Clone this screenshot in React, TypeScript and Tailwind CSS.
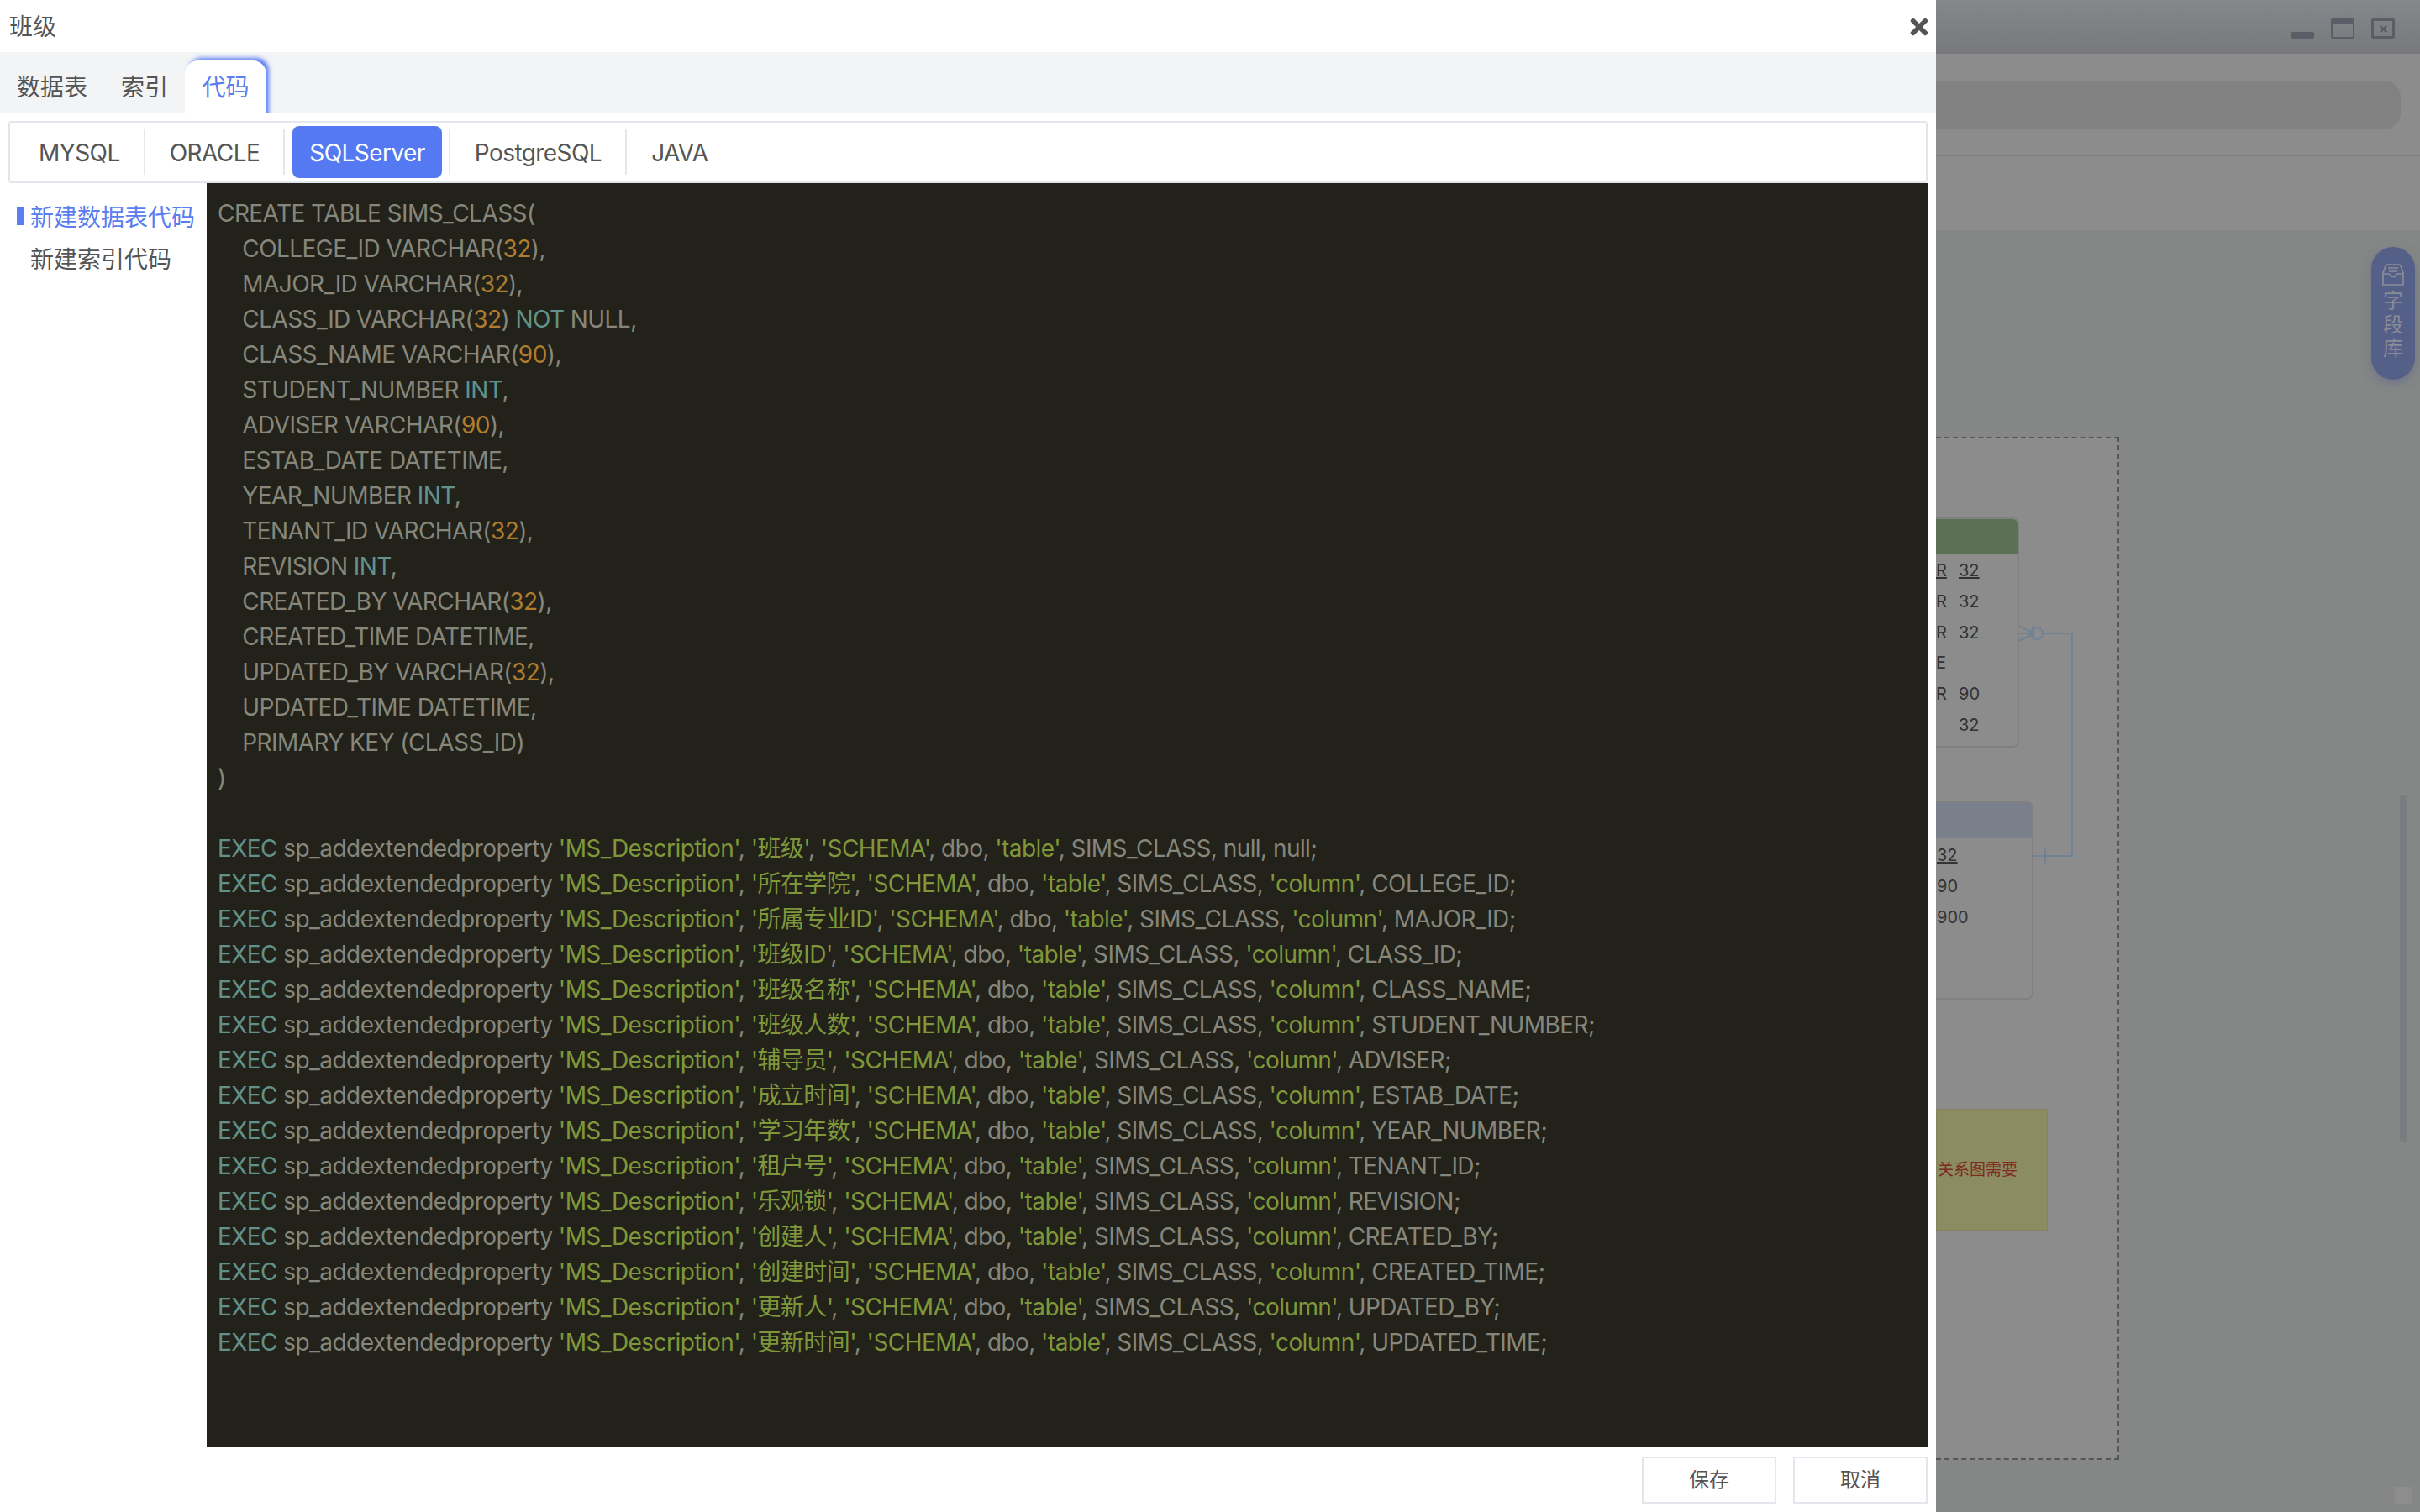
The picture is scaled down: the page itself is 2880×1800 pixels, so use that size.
import { FaTimes } from 'react-icons/fa'

const FONT = "font-['Inter','Noto_Sans_CJK_SC',sans-serif]"

const createLines = [
  'CREATE TABLE SIMS_CLASS(',
  '    COLLEGE_ID VARCHAR(32),',
  '    MAJOR_ID VARCHAR(32),',
  '    CLASS_ID VARCHAR(32) NOT NULL,',
  '    CLASS_NAME VARCHAR(90),',
  '    STUDENT_NUMBER INT,',
  '    ADVISER VARCHAR(90),',
  '    ESTAB_DATE DATETIME,',
  '    YEAR_NUMBER INT,',
  '    TENANT_ID VARCHAR(32),',
  '    REVISION INT,',
  '    CREATED_BY VARCHAR(32),',
  '    CREATED_TIME DATETIME,',
  '    UPDATED_BY VARCHAR(32),',
  '    UPDATED_TIME DATETIME,',
  '    PRIMARY KEY (CLASS_ID)',
  ')',
  '',
]

const columns = [
  ['所在学院', 'COLLEGE_ID'],
  ['所属专业ID', 'MAJOR_ID'],
  ['班级ID', 'CLASS_ID'],
  ['班级名称', 'CLASS_NAME'],
  ['班级人数', 'STUDENT_NUMBER'],
  ['辅导员', 'ADVISER'],
  ['成立时间', 'ESTAB_DATE'],
  ['学习年数', 'YEAR_NUMBER'],
  ['租户号', 'TENANT_ID'],
  ['乐观锁', 'REVISION'],
  ['创建人', 'CREATED_BY'],
  ['创建时间', 'CREATED_TIME'],
  ['更新人', 'UPDATED_BY'],
  ['更新时间', 'UPDATED_TIME'],
]

const codeLines = [
  ...createLines,
  "EXEC sp_addextendedproperty 'MS_Description', '班级', 'SCHEMA', dbo, 'table', SIMS_CLASS, null, null;",
  ...columns.map(
    ([label, name]) =>
      `EXEC sp_addextendedproperty 'MS_Description', '${label}', 'SCHEMA', dbo, 'table', SIMS_CLASS, 'column', ${name};`,
  ),
]

const CodeLine = ({ text }: { text: string }) => {
  const parts = text.split(/('[^']*'|\bEXEC\b|\bNOT\b|\bINT\b|\b\d+\b)/)
  return (
    <div className="h-[42px] whitespace-pre leading-[42px]">
      {parts.map((part, i) => {
        if (part.startsWith("'")) {
          return (
            <span key={i} className="text-[#7f973a]">
              {part}
            </span>
          )
        }
        if (/^\d+$/.test(part)) {
          return (
            <span key={i} className="text-[#b07c2e]">
              {part}
            </span>
          )
        }
        if (part === 'EXEC' || part === 'NOT' || part === 'INT') {
          return (
            <span key={i} className="text-[#62918a]">
              {part}
            </span>
          )
        }
        return <span key={i}>{part}</span>
      })}
    </div>
  )
}

const Separator = () => <div className="-mx-px h-[54px] w-[2px] bg-[#e3e6ec]" />

const DbTab = ({ label, active }: { label: string; active?: boolean }) => (
  <div
    className={
      active
        ? 'ml-[10px] mr-[9px] flex h-[62px] items-center rounded-[8px] bg-[#5579f2] px-[20px] pt-[2px] text-white'
        : 'ml-[10px] mr-[9px] flex h-[62px] items-center px-[20px] pt-[2px]'
    }
  >
    {label}
  </div>
)

const Modal = () => (
  <div className="absolute left-0 top-0 flex h-[1800px] w-[2304px] flex-col bg-white text-[28px] text-[#555]">
    <div className="flex h-[62px] items-center justify-between pl-[11px] pr-[7px] pt-[2px]">
      <span>班级</span>
      <FaTimes className="h-[30px] w-[26px] text-[#555]" />
    </div>
    <div className="flex h-[72px] items-start overflow-hidden bg-[#f3f4f6] pt-[10px]">
      <div className="flex h-[62px] items-center px-[20px] pt-[2px]">数据表</div>
      <div className="flex h-[62px] items-center px-[20px] pt-[2px]">索引</div>
      <div className="flex h-[80px] w-[97px] items-start justify-center rounded-t-[16px] bg-white pt-[11px] text-[#5a7df0] shadow-[4px_-4px_5px_-1px_#5b7ff5]">
        代码
      </div>
    </div>
    <div className="mx-[10px] mt-[10px] flex h-[74px] items-center rounded-[4px] border-2 border-[#e3e6ec] pl-[4px] tracking-[-0.56px]">
      <DbTab label="MYSQL" />
      <Separator />
      <DbTab label="ORACLE" />
      <Separator />
      <DbTab label="SQLServer" active />
      <Separator />
      <DbTab label="PostgreSQL" />
      <Separator />
      <DbTab label="JAVA" />
    </div>
    <div className="flex h-[1505px] pr-[10px]">
      <div className="w-[246px] shrink-0 pt-[16px]">
        <div className="relative flex h-[50px] items-center pl-[36px] text-[#5a7df0]">
          <span className="absolute left-[20px] top-[12px] h-[22px] w-[8px] bg-[#5a7df0]" />
          新建数据表代码
        </div>
        <div className="flex h-[50px] items-center pl-[36px]">新建索引代码</div>
      </div>
      <div className="flex-1 bg-[#22221b] pl-[13px] pt-[15px] tracking-[-0.56px] text-[#86867a]">
        {codeLines.map((line, i) => (
          <CodeLine key={i} text={line} />
        ))}
      </div>
    </div>
    <div className="flex justify-end gap-[20px] pr-[10px] pt-[11px]">
      <div className="flex h-[56px] w-[160px] items-center justify-center border-2 border-[#e3e6ec] text-[24px]">
        保存
      </div>
      <div className="flex h-[56px] w-[160px] items-center justify-center border-2 border-[#e3e6ec] text-[24px]">
        取消
      </div>
    </div>
  </div>
)

const WindowButtons = () => (
  <div className="flex items-end gap-[20px] pb-[18px] pr-[30px]">
    <div className="h-[8px] w-[28px] rounded-[2px] bg-[#5d5d68]" />
    <div className="h-[24px] w-[28px] rounded-[2px] border-2 border-t-[6px] border-[#5d5d68]" />
    <div className="flex h-[24px] w-[28px] items-center justify-center rounded-[2px] border-[3px] border-[#5d5d68]">
      <FaTimes className="h-[13px] w-[11px] text-[#5d5d68]" />
    </div>
  </div>
)

const FieldLibrary = () => (
  <div className="absolute left-[2822px] top-[294px] flex h-[158px] w-[52px] flex-col items-center rounded-full bg-[#556089] pt-[20px] text-[24px] leading-[28.5px] text-[#8a8c96] shadow-[0_4px_12px_rgba(85,96,137,0.5)]">
    <svg viewBox="0 0 26 26" className="mb-[4px] h-[26px] w-[26px]" fill="none" stroke="#8a8c96" strokeWidth="1.7">
      <path d="M1 11 L4 2.5 Q4.5 1 6 1 H20 Q21.5 1 22 2.5 L25 11 V25 H1 Z" />
      <path d="M1 12 H8 Q9 12 10 14 L11 15.5 H15 L16 14 Q17 12 18 12 H25" />
      <path d="M7 5 H19 M8 9 H18" />
    </svg>
    <span>字</span>
    <span>段</span>
    <span>库</span>
  </div>
)

const Diagram = () => (
  <div className="absolute left-[2304px] top-[520px] h-[1218px] w-[218px] border-r-2 border-t-2 border-b-2 border-dashed border-[#55565a] bg-[#8c8c8c] text-[20px] text-[#333]">
    <div className="absolute left-0 top-[94px] h-[274px] w-[99px] rounded-r-[8px] border-2 border-l-0 border-[#808080]">
      <div className="h-[42px] rounded-tr-[6px] bg-[#5b6f54]" />
      {['R', 'R', 'R', 'E', 'R', ''].map((t, i) => (
        <div key={i} className="flex h-[36.7px] items-center pt-[2px]">
          <span className={i === 0 ? 'w-[27px] underline' : 'w-[27px]'}>{t}</span>
          <span className={i === 0 ? 'underline' : ''}>{['32', '32', '32', '', '90', '32'][i]}</span>
        </div>
      ))}
    </div>
    <div className="absolute left-0 top-[432px] h-[236px] w-[116px] rounded-r-[8px] border-2 border-l-0 border-[#808080]">
      <div className="h-[42px] rounded-tr-[6px] bg-[#7a7f8c]" />
      <div className="flex h-[37px] items-center pl-[1px] pt-[2px] underline">32</div>
      <div className="flex h-[37px] items-center pl-[1px] pt-[2px]">90</div>
      <div className="flex h-[37px] items-center pl-[1px] pt-[2px]">900</div>
    </div>
    <svg className="absolute left-[96px] top-[220px] h-[290px] w-[70px]" viewBox="0 0 70 290" fill="none" stroke="#6f8296" strokeWidth="2">
      <path d="M3 3 L20 12 L3 21 M3 12 H20 M20 3 V21" />
      <circle cx="24" cy="12" r="7" />
      <path d="M31 12 H66 V277 H19 M34 268 V286" />
    </svg>
    <div className="absolute left-0 top-[798px] flex h-[145px] w-[133px] items-center border border-[#83845f] bg-[#8b8c62] pl-[1px] pt-[2px] text-[19px] text-[#7f2b20]">
      关系图需要
    </div>
  </div>
)

export default function App() {
  return (
    <div className={`relative h-[1800px] w-[2880px] overflow-hidden bg-[#858786] ${FONT}`}>
      <div className="flex h-[64px] items-end justify-end bg-gradient-to-b from-[#86878b] to-[#78797c]">
        <WindowButtons />
      </div>
      <div className="h-[210px] bg-[#8c8c8c] pr-[23px] pt-[32px]">
        <div className="h-[58px] rounded-[20px] bg-[#818181]" />
        <div className="mr-[-23px] mt-[30px] h-[2px] bg-[#7f7f85]" />
      </div>
      <Diagram />
      <div className="absolute left-[2856px] top-[946px] h-[414px] w-[8px] rounded-full bg-[#7b7c80]" />
      <div className="absolute left-[2850px] top-[1770px] h-[20px] w-[20px] bg-[#8d8d8d]" />
      <FieldLibrary />
      <Modal />
    </div>
  )
}
